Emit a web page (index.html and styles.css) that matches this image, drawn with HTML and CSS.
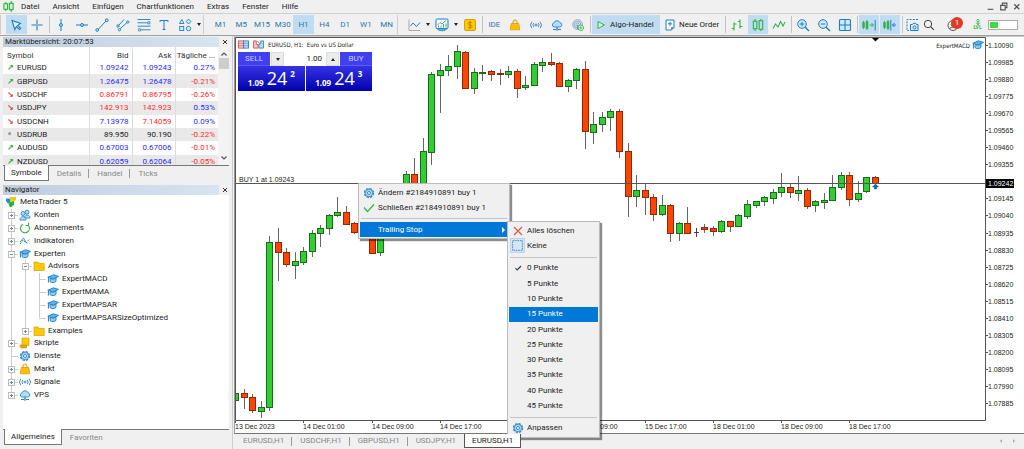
FILE: index.html
```html
<!DOCTYPE html>
<html lang="de">
<head>
<meta charset="utf-8">
<title>MetaTrader 5</title>
<link rel="stylesheet" href="styles.css">
</head>
<body>
<svg class="sprite" aria-hidden="true">
  <symbol id="i-cap" viewBox="0 0 12 12"><path d="M.8 4.2 6.5 1.8l5 1.6-5.3 2.7z" fill="#5fb4ee" stroke="#1f7fc0" stroke-width=".9"/><path d="M3 5.4v3.2c1.6 1.6 4.6 1.2 6-.2V4.9L6.2 6.3z" fill="#8fccf5" stroke="#1f7fc0" stroke-width=".9"/><path d="M1.4 4.6v5" stroke="#1f7fc0"/></symbol>
  <symbol id="i-folder" viewBox="0 0 12 12"><path d="M1 2h4l1 1.500h5.200V10.500H1z" fill="#ffc800" stroke="#d9a000" stroke-width=".7"/></symbol>
  <symbol id="i-gear" viewBox="0 0 12 12"><circle cx="6" cy="6" r="4.400" fill="#b5dcf8" stroke="#2a82c4" stroke-width="1.500" stroke-dasharray="2.300 1.150"/><circle cx="6" cy="6" r="3.600" fill="#b5dcf8" stroke="#2a82c4" stroke-width=".7"/><circle cx="6" cy="6" r="1.500" fill="#fff" stroke="#2a82c4" stroke-width=".9"/></symbol>
  <symbol id="i-bag" viewBox="0 0 12 12"><path d="M2.200 4.500h7.600l1 6.300H1.200z" fill="#ffbf00" stroke="#d99a00" stroke-width=".7"/><path d="M4 5V3a2 2 0 0 1 4 0v2" fill="none" stroke="#d99a00" stroke-width="1"/></symbol>
  <symbol id="i-signal" viewBox="0 0 12 12"><g fill="none" stroke="#2a82c4" stroke-width=".9"><circle cx="6" cy="6" r="1"/><path d="M3.800 4a3 3 0 0 0 0 4M8.200 4a3 3 0 0 1 0 4M1.800 2.800a5 5 0 0 0 0 6.400M10.200 2.800a5 5 0 0 1 0 6.400"/></g></symbol>
  <symbol id="i-cloud" viewBox="0 0 12 12"><path d="M3 8a2.100 2.100 0 0 1 0-4.100 3.200 3.200 0 0 1 6-.2A2.200 2.200 0 0 1 9.200 8z" fill="#b5dcf8" stroke="#2a82c4" stroke-width=".9"/><path d="M6 8v2.500M2 10.500h8" stroke="#2a82c4"/><circle cx="6" cy="10.400" r="1" fill="#b5dcf8" stroke="#2a82c4" stroke-width=".7"/></symbol>
  <symbol id="i-candles" viewBox="0 0 12 12"><g fill="none" stroke="#35b34a"><path d="M3.500.8v2M3.500 9.200v2M8.500.8v1.500M8.500 9.700v1.500"/><rect x="2" y="2.800" width="3" height="6.400"/><rect x="7" y="2.300" width="3" height="7.400"/></g></symbol>
</svg>

<header class="menubar">
  <svg class="logo" viewBox="0 0 12 12" aria-hidden="true"><g fill="none" stroke="#27b43e" stroke-width="1.200"><path d="M3 1v10M9 0v12"/><rect x="1" y="3" width="4" height="6" fill="#dff5e2"/><rect x="7" y="2.500" width="4" height="7" fill="#dff5e2"/></g></svg>
  <nav class="menus">
    <button>Datei</button><button>Ansicht</button><button>Einfügen</button><button>Chartfunktionen</button><button>Extras</button><button>Fenster</button><button>Hilfe</button>
  </nav>
  <div class="winctl">
    <button aria-label="Minimieren"><svg viewBox="0 0 8 8"><path d="M1.500 6.500h5" stroke="#555"/></svg></button>
    <button aria-label="Wiederherstellen"><svg viewBox="0 0 8 8"><path d="M1.500 3h4v4h-4zM3 3V1h4v4H5.500" fill="none" stroke="#555"/></svg></button>
    <button aria-label="Schließen"><svg viewBox="0 0 8 8"><path d="M2 2l4.500 4.500M6.500 2 2 6.500" stroke="#555" stroke-width="1.100"/></svg></button>
  </div>
</header>

<div class="toolbar" role="toolbar" aria-label="Werkzeuge">
  <span class="handle"></span>
  <div class="group g-pointer">
    <button class="on" aria-label="Cursor"><svg viewBox="0 0 14 14"><path d="M3 2.500 5.800 11.500l1.700-3 3 3 1.200-1.200-3-3L11.500 5.500z" fill="#e8f4fd" stroke="#1f7fc0" stroke-width="1.100"/></svg></button>
    <button aria-label="Fadenkreuz"><svg viewBox="0 0 14 14"><path d="M7 1.500V6M7 8v4.500M1.500 7H6M8 7h4.500" stroke="#1f7fc0" stroke-width="1.100"/><path d="M6 7h2M7 6v2" stroke="#1f7fc0" stroke-width=".6"/></svg></button>
  </div>
  <span class="sep"></span>
  <div class="group g-draw">
    <button aria-label="Vertikale Linie"><svg viewBox="0 0 14 14"><path d="M7 1v4.500M7 8.500V13" stroke="#1f7fc0"/><circle cx="7" cy="7" r="1.500" fill="#b5dcf8" stroke="#1f7fc0"/></svg></button>
    <button aria-label="Horizontale Linie"><svg viewBox="0 0 14 14"><path d="M1 7h4.500M8.500 7H13" stroke="#1f7fc0"/><circle cx="7" cy="7" r="1.500" fill="#b5dcf8" stroke="#1f7fc0"/></svg></button>
    <button aria-label="Trendlinie"><svg viewBox="0 0 14 14"><path d="M3 11.500 11 3" stroke="#1f7fc0"/><circle cx="2.200" cy="12" r="1.400" fill="#b5dcf8" stroke="#1f7fc0" stroke-width=".9"/><circle cx="11.800" cy="2.200" r="1.400" fill="#b5dcf8" stroke="#1f7fc0" stroke-width=".9"/></svg></button>
    <button aria-label="Kanal"><svg viewBox="0 0 14 14"><path d="M2 8 8 1.500M3 11.800 11.500 4" stroke="#1f7fc0"/><circle cx="2" cy="8" r="1.200" fill="#b5dcf8" stroke="#1f7fc0" stroke-width=".8"/><circle cx="3.500" cy="11.700" r="1.200" fill="#b5dcf8" stroke="#1f7fc0" stroke-width=".8"/><circle cx="11.800" cy="4" r="1.200" fill="#b5dcf8" stroke="#1f7fc0" stroke-width=".8"/></svg></button>
    <button aria-label="Fibonacci"><svg viewBox="0 0 14 14"><path d="M.5 1.500h13M.5 4.800h10M.5 8.200h13M4 11.800h9.500" stroke="#1f7fc0" stroke-width=".9"/><circle cx="11.800" cy="4.800" r="1.300" fill="#b5dcf8" stroke="#1f7fc0" stroke-width=".8"/><circle cx="2.500" cy="11.800" r="1.300" fill="#b5dcf8" stroke="#1f7fc0" stroke-width=".8"/></svg></button>
    <button aria-label="Text"><svg viewBox="0 0 14 14"><path d="M3 4V2.500h8V4M7 2.500v9M5.500 11.500h3" fill="none" stroke="#1f7fc0"/></svg></button>
    <button aria-label="Formen"><svg viewBox="0 0 14 14"><g fill="#d5ebfb" stroke="#1f7fc0" stroke-width=".9"><path d="M3.800 1.500 6 5.500H1.500z"/><path d="M10.500 1 12.800 3.500 10.500 6 8.200 3.500z"/><rect x="1.700" y="8.500" width="4" height="4"/><circle cx="10.500" cy="10.500" r="2.200"/></g></svg></button>
  </div>
  <button class="caret" aria-label="Weitere Formen"></button>
  <span class="handle wide"></span>
  <div class="group g-time">
    <button>M1</button><button>M5</button><button>M15</button><button>M30</button><button class="on">H1</button><button>H4</button><button>D1</button><button>W1</button><button>MN</button>
  </div>
  <span class="handle wide"></span>
  <div class="group g-one">
    <button aria-label="Indikatoren"><svg viewBox="0 0 14 14"><path d="M2 1.500V12.500H13" fill="none" stroke="#aaa"/><path d="M3.500 8 6 5l3.500 3.500 3.500-4" fill="none" stroke="#1f7fc0"/></svg></button>
  </div>
  <button class="caret" aria-label="Indikatorliste"></button>
  <div class="group g-one">
    <button aria-label="Vorlagen"><svg viewBox="0 0 14 14"><rect x="1" y="1" width="12" height="9.500" rx="1" fill="#fff" stroke="#1f7fc0"/><path d="M2 10.500c1.500 3 8.500 3 10 0z" fill="#5fb4ee" stroke="#1f7fc0" stroke-width=".8"/><path d="M2.500 7 5 4.500 7 6l4-3.500" fill="none" stroke="#1f7fc0" stroke-width=".8"/><path d="M3.500 9.500V7.500M6 9.500v-2M8.500 9.500V6M11 9.500v-4" stroke="#35b34a"/></svg></button>
  </div>
  <button class="caret" aria-label="Vorlagenliste"></button>
  <div class="group g-one">
    <button aria-label="Handel"><svg viewBox="0 0 14 14"><rect x="1.500" y="1.500" width="11" height="11" rx="1.500" fill="#ffc800" stroke="#d9a000"/><path d="M9 5c-.5-1.200-3.800-1.200-3.800.5 0 1.800 3.800 1 3.800 3 0 1.600-3.500 1.600-4 .2M7 3v8" fill="none" stroke="#b07c00" stroke-width=".9"/></svg></button>
  </div>
  <span class="sep"></span>
  <div class="group g-market">
    <button>IDE</button>
    <button aria-label="Markt"><svg><use href="#i-bag"/></svg></button>
    <button aria-label="Signale"><svg><use href="#i-signal"/></svg></button>
    <button aria-label="VPS"><svg><use href="#i-cloud"/></svg></button>
    <button aria-label="Netzwerk"><svg viewBox="0 0 14 14"><g fill="none" stroke="#5d8fb5" stroke-width=".9"><circle cx="6.500" cy="6.500" r="5.600"/><circle cx="6.500" cy="6.500" r="3.700"/><circle cx="6.500" cy="6.500" r="1.800"/><path d="M6.500 6.500v6"/></g><circle cx="10.300" cy="10.300" r="3.200" fill="#e6f8e8" stroke="#35b34a"/><path d="M8.500 10.300h3.600M10.300 8.500v3.600" stroke="#35b34a"/></svg></button>
  </div>
  <span class="sep"></span>
  <button class="wide-btn algo on"><svg viewBox="0 0 10 10"><path d="M2 1.500 8.500 5 2 8.500z" fill="#d9f5dd" stroke="#35b34a"/></svg>Algo-Handel</button>
  <button class="wide-btn order"><svg viewBox="0 0 10 12"><path d="M1 1h8v7.500L6.500 11H1z" fill="#fff" stroke="#1f7fc0"/><path d="M9 8.200H6.200V11z" fill="#1f7fc0"/><path d="M3 4.800h4M5 2.800v4" stroke="#1f7fc0"/></svg>Neue Order</button>
  <span class="sep"></span>
  <div class="group g-three">
    <button aria-label="Balken"><svg viewBox="0 0 14 14"><path d="M4 4.500v8M1.800 10.500H4M4 6h2.500M10 1.500v9M7.800 3.500H10M10 8.500h2.500" fill="none" stroke="#35b34a" stroke-width="1.100"/></svg></button>
    <button class="on" aria-label="Kerzen"><svg><use href="#i-candles"/></svg></button>
    <button aria-label="Linie"><svg viewBox="0 0 14 14"><path d="M1 10.500 3.500 6 6 9l2.500-5.500L11 8l2-4" fill="none" stroke="#35b34a" stroke-width="1.100"/></svg></button>
  </div>
  <span class="sep"></span>
  <div class="group g-three">
    <button aria-label="Vergrößern"><svg viewBox="0 0 14 14"><path d="M9 9l4 4" stroke="#1f7fc0" stroke-width="1.400"/><circle cx="6" cy="6" r="4.300" fill="#cfe8fb" stroke="#1f7fc0"/><path d="M3.800 6h4.400M6 3.800v4.400" stroke="#1f7fc0"/></svg></button>
    <button aria-label="Verkleinern"><svg viewBox="0 0 14 14"><path d="M9 9l4 4" stroke="#1f7fc0" stroke-width="1.400"/><circle cx="6" cy="6" r="4.300" fill="#cfe8fb" stroke="#1f7fc0"/><path d="M3.800 6h4.400" stroke="#1f7fc0"/></svg></button>
    <button aria-label="Kacheln"><svg viewBox="0 0 14 14"><rect x="1.500" y="1.500" width="11" height="11" rx="1" fill="#cfe8fb" stroke="#1f7fc0" stroke-width="1.100"/><path d="M7 1.500v11M1.500 7h11" stroke="#1f7fc0" stroke-width="1.100"/></svg></button>
  </div>
  <span class="sep"></span>
  <div class="group g-scroll">
    <button class="on" aria-label="Autoscroll"><svg viewBox="0 0 14 14"><path d="M.5 4.500h2v5h-2zM4 3.500h2v7H4z" fill="#35b34a" stroke="#35b34a" stroke-width=".6"/><path d="M1.500 3v8M5 2v10M7.500 7h3.500M9.500 5l2 2-2 2" fill="none" stroke="#35b34a"/><path d="M13.200 2v10.500" stroke="#1f7fc0"/></svg></button>
    <button class="on" aria-label="Chartverschiebung"><svg viewBox="0 0 14 14"><path d="M.5 4.500h2v5h-2zM4 3.500h2v7H4z" fill="#35b34a" stroke="#35b34a" stroke-width=".6"/><path d="M1.500 3v8M5 2v10" stroke="#35b34a"/><path d="M7.800 2v10.500M9.500 7H13M11.500 5l-2 2 2 2" fill="none" stroke="#1f7fc0"/></svg></button>
  </div>
  <span class="sep"></span>
  <div class="group g-shot"><button aria-label="Screenshot"><svg viewBox="0 0 14 14"><path d="M13 1.500H2v11h2" fill="none" stroke="#1f7fc0" stroke-dasharray="2 1.200"/><path d="M5.500 6.500h2l.8-1.200h2.400l.8 1.200H13v6H5.500z" fill="#d5ebfb" stroke="#1f7fc0"/><circle cx="9.500" cy="9.500" r="1.500" fill="none" stroke="#1f7fc0"/></svg></button></div>
  <div class="group g-find"><button aria-label="Suchen"><svg viewBox="0 0 14 14"><circle cx="6" cy="6" r="3.700" fill="none" stroke="#444"/><path d="M8.800 8.800l3 3" stroke="#444" stroke-width="1.200"/></svg></button></div>
  <div class="group g-user"><button aria-label="Konto, 1 Meldung"><svg viewBox="0 0 14 14"><circle cx="7" cy="7.500" r="5" fill="none" stroke="#555"/><circle cx="7" cy="6.500" r="1.800" fill="none" stroke="#555"/><path d="M3.500 11c1-2.500 6-2.500 7 0" fill="none" stroke="#555"/></svg><span class="badge">1</span></button></div>
  <button class="level" aria-label="Level"><svg viewBox="0 0 8 6"><path d="M4 .8V6M2 3.500 4 5.500l2-2" fill="none" stroke="#35b34a"/><circle cx="4" cy="1.500" r="1.200" fill="#e6f8e8" stroke="#35b34a" stroke-width=".8"/></svg>LVL</button>
  <span class="battery"><span></span></span>
</div>

<main class="main">
  <aside class="side">
    <section class="panel watch">
      <div class="title"><h2>Marktübersicht: 20:07:53</h2><button aria-label="Schließen"><svg viewBox="0 0 8 8"><path d="M2 2l4 4M6 2 2 6" stroke="#333"/></svg></button></div>
      <div class="watch-body">
        <table>
          <colgroup><col><col class="num"><col class="num"><col class="num"></colgroup>
          <thead><tr><th>Symbol</th><th>Bid</th><th>Ask</th><th>Tägliche ...</th></tr></thead>
          <tbody>
            <tr><td class="up">EURUSD</td><td class="b">1.09242</td><td class="b">1.09243</td><td class="b">0.27%</td></tr>
            <tr><td class="up">GBPUSD</td><td class="b">1.26475</td><td class="b">1.26478</td><td class="r">-0.21%</td></tr>
            <tr><td class="down">USDCHF</td><td class="r">0.86791</td><td class="r">0.86795</td><td class="r">-0.26%</td></tr>
            <tr><td class="down">USDJPY</td><td class="r">142.913</td><td class="r">142.923</td><td class="b">0.53%</td></tr>
            <tr><td class="down">USDCNH</td><td class="b">7.13978</td><td class="r">7.14059</td><td class="b">0.09%</td></tr>
            <tr><td class="flat">USDRUB</td><td>89.950</td><td>90.190</td><td class="r">-0.22%</td></tr>
            <tr><td class="up">AUDUSD</td><td class="b">0.67003</td><td class="b">0.67006</td><td class="r">-0.01%</td></tr>
            <tr><td class="up">NZDUSD</td><td class="b">0.62059</td><td class="b">0.62064</td><td class="r">-0.05%</td></tr>
          </tbody>
        </table>
        <div class="scroll">
          <svg viewBox="0 0 8 8"><path d="M1.500 5.500 4 3l2.500 2.500" fill="none" stroke="#555" stroke-width="1.200"/></svg>
          <span class="thumb"></span>
          <svg viewBox="0 0 8 8"><path d="M1.500 2.500 4 5l2.500-2.500" fill="none" stroke="#555" stroke-width="1.200"/></svg>
        </div>
      </div>
      <div class="tabs"><button class="active">Symbole</button><button>Details</button><button>Handel</button><button>Ticks</button></div>
    </section>

    <section class="panel nav">
      <div class="title"><h2>Navigator</h2><button aria-label="Schließen"><svg viewBox="0 0 8 8"><path d="M2 2l4 4M6 2 2 6" stroke="#333"/></svg></button></div>
      <div class="tree-wrap">
        <ul class="tree">
          <li><svg viewBox="0 0 12 12"><path d="M1 2.500h4.500V6L3 7.500 1 5z" fill="#1f8fe0"/><path d="M5 1h6v3L8 6 5 4.500z" fill="#ffc800"/><path d="M3.500 6.500 9 5v3.500L6 11.500 4 10z" fill="#27b43e"/></svg>MetaTrader 5</li>
          <li><i class="plus"></i><svg viewBox="0 0 12 12"><g fill="#b5dcf8" stroke="#2a82c4" stroke-width=".9"><circle cx="8" cy="3.200" r="2"/><path d="M5.500 9c0-4 5.500-4 5.500 0z"/><circle cx="4" cy="4.500" r="2"/><path d="M1 11c0-4.500 6-4.500 6 0z"/></g></svg>Konten</li>
          <li><i class="plus"></i><svg viewBox="0 0 12 12"><path d="M4 2.200A4.500 4.500 0 1 0 9.500 3.500M9.500 3.500h-3M9.500 3.500V.8" fill="none" stroke="#35b34a" stroke-width="1.100"/></svg>Abonnements</li>
          <li><i class="plus"></i><svg viewBox="0 0 12 12"><path d="M1 9 4 5l3 3 4-4.500" fill="none" stroke="#35b34a" stroke-dasharray="2 1"/><path d="M1 7l3.500-4L7 7.500 8.500 8" fill="none" stroke="#2a82c4" stroke-width=".9"/></svg>Indikatoren</li>
          <li><i class="minus"></i><svg><use href="#i-cap"/></svg>Experten</li>
          <li><i class="line"></i><i class="minus"></i><svg><use href="#i-folder"/></svg>Advisors</li>
          <li><i class="line"></i><i class="line"></i><i class="tee"></i><svg><use href="#i-cap"/></svg>ExpertMACD</li>
          <li><i class="line"></i><i class="line"></i><i class="tee"></i><svg><use href="#i-cap"/></svg>ExpertMAMA</li>
          <li><i class="line"></i><i class="line"></i><i class="tee"></i><svg><use href="#i-cap"/></svg>ExpertMAPSAR</li>
          <li><i class="line"></i><i class="line"></i><i class="tee end"></i><svg><use href="#i-cap"/></svg>ExpertMAPSARSizeOptimized</li>
          <li><i class="line"></i><i class="plus end"></i><svg><use href="#i-folder"/></svg>Examples</li>
          <li><i class="plus"></i><svg viewBox="0 0 12 12"><path d="M3 1h7v7.500H3z" fill="#ffc800" stroke="#d9a000" stroke-width=".7"/><path d="M1 8h6.500v3H2.500C1.500 11 1 10 1 8z" fill="#e6a800" stroke="#c08a00" stroke-width=".6"/></svg>Skripte</li>
          <li><i class="tee"></i><svg><use href="#i-gear"/></svg>Dienste</li>
          <li><i class="plus"></i><svg><use href="#i-bag"/></svg>Markt</li>
          <li><i class="plus"></i><svg><use href="#i-signal"/></svg>Signale</li>
          <li><i class="plus end"></i><svg><use href="#i-cloud"/></svg>VPS</li>
        </ul>
      </div>
      <div class="tabs"><button class="active">Allgemeines</button><button class="plain">Favoriten</button></div>
    </section>
  </aside>

  <section class="work">
    <div class="chart">
      <svg id="plot" class="plot" viewBox="235 37 751 396" preserveAspectRatio="xMinYMin meet" role="img" aria-label="EURUSD H1">
        <g id="candles"></g>
        <path d="M235 183.500H986" stroke="#555"/>
        <path d="M875.500 184l3 3h-2v2h-2v-2h-2z" fill="#0a64b4" stroke="#0a64b4" stroke-width=".6"/>
        <path d="M872 38h7l-3.500 3.500z" fill="#000"/>
        <path d="M235.500 37.500h750v383h-750z" fill="none" stroke="#555"/>
        <g id="times"></g>
        <text x="239" y="182">BUY 1 at 1.09243</text>
      </svg>
      <ol class="prices">
        <li>1.10090</li><li>1.09985</li><li>1.09880</li><li>1.09775</li><li>1.09670</li><li>1.09565</li><li>1.09460</li><li>1.09355</li><li class="now"><b>1.09242</b></li><li>1.09145</li><li>1.09040</li><li>1.08935</li><li>1.08830</li><li>1.08725</li><li>1.08620</li><li>1.08515</li><li>1.08410</li><li>1.08305</li><li>1.08200</li><li>1.08095</li><li>1.07990</li><li>1.07885</li>
      </ol>
      <div class="chart-head">
        <svg viewBox="0 0 12 10"><rect x=".5" y="1" width="5.500" height="8" fill="#f7c9c6" stroke="#d9534f"/><rect x="6" y="1" width="5.500" height="8" fill="#c3e0f7" stroke="#2a82c4"/><path d="M1 3.700h4.500M1 6.300h4.500" stroke="#d9534f" stroke-width=".7"/><path d="M6.500 3.700H11M6.500 6.300H11" stroke="#2a82c4" stroke-width=".7"/></svg>
        <svg viewBox="0 0 12 10"><path d="M.5 1h3v4h2v4h-5z" fill="#f7c9c6" stroke="#d9534f"/><path d="M6.500 9V4.500h2V1h3v8z" fill="#c3e0f7" stroke="#2a82c4"/><path d="M4.500 1l3 3" stroke="#d9534f"/></svg>
        <span>EURUSD, H1:&nbsp; Euro vs US Dollar</span>
      </div>
      <div class="expert">ExpertMACD<svg><use href="#i-cap"/></svg></div>
      <form class="trade">
        <div class="trade-top">
          <button type="button" class="side-btn">SELL</button>
          <button type="button" class="spin" aria-label="Weniger"></button>
          <input type="text" value="1.00" aria-label="Volumen">
          <button type="button" class="spin more" aria-label="Mehr"></button>
          <button type="button" class="side-btn">BUY</button>
        </div>
        <div class="trade-prices">
          <div class="quote"><small>1.09</small><strong>24</strong><sup>2</sup></div>
          <div class="quote"><small>1.09</small><strong>24</strong><sup>3</sup></div>
        </div>
      </form>
      <div class="menu menu-order" role="menu">
        <button role="menuitem"><svg><use href="#i-gear"/></svg>Ändern #2184910891 buy 1</button>
        <button role="menuitem"><svg viewBox="0 0 12 12"><path d="M1 5.500 4.500 9.500 11 2.500" fill="none" stroke="#35b34a" stroke-width="1.200"/></svg>Schließen #2184910891 buy 1</button>
        <hr>
        <button role="menuitem" class="hot"><svg></svg>Trailing Stop<span class="arrow"></span></button>
      </div>
      <div class="menu menu-stop" role="menu">
        <button role="menuitem"><svg viewBox="0 0 12 12"><path d="M2 2l8 8M10 2l-8 8" stroke="#e0504c" stroke-width="1.100"/></svg>Alles löschen</button>
        <button role="menuitem"><svg class="boxed" viewBox="0 0 12 12"><rect x="1.500" y="1.500" width="9" height="9" fill="none" stroke="#2a82c4" stroke-width=".8" stroke-dasharray="1.500 .75"/></svg>Keine</button>
        <hr>
        <button role="menuitem"><svg viewBox="0 0 12 12"><path d="M3.500 6 5.200 8 9 4" fill="none" stroke="#333" stroke-width="1.100"/></svg>0 Punkte</button>
        <button role="menuitem"><svg></svg>5 Punkte</button>
        <button role="menuitem"><svg></svg>10 Punkte</button>
        <button role="menuitem" class="hot"><svg></svg>15 Punkte</button>
        <button role="menuitem"><svg></svg>20 Punkte</button>
        <button role="menuitem"><svg></svg>25 Punkte</button>
        <button role="menuitem"><svg></svg>30 Punkte</button>
        <button role="menuitem"><svg></svg>35 Punkte</button>
        <button role="menuitem"><svg></svg>40 Punkte</button>
        <button role="menuitem"><svg></svg>45 Punkte</button>
        <hr>
        <button role="menuitem"><svg><use href="#i-gear"/></svg>Anpassen</button>
      </div>
    </div>
    <div class="chart-tabs">
      <button>EURUSD,H1</button><button>USDCHF,H1</button><button>GBPUSD,H1</button><button>USDJPY,H1</button><button class="active">EURUSD,H1</button>
      <span class="pager"><button aria-label="Zurück"><svg viewBox="0 0 6 6"><path d="M4 1v4L2 3z" fill="#aaa"/></svg></button><button aria-label="Weiter"><svg viewBox="0 0 6 6"><path d="M2 1v4l2-2z" fill="#aaa"/></svg></button></span>
    </div>
  </section>
</main>
<script src="chart.js"></script>
</body>
</html>
```
FILE: styles.css
```css
* { box-sizing: border-box; }
body {
  margin: 0;
  min-height: 100vh;
  display: flex;
  flex-direction: column;
  background: #f0f0f0;
  color: #222;
  font: 8px/12px Roboto, "Noto Sans", sans-serif;
}
button {
  border: 0;
  padding: 0;
  background: none;
  color: inherit;
  font: inherit;
  white-space: nowrap;
}
h2, ul, ol { margin: 0; padding: 0; font: inherit; list-style: none; }
svg { display: block; flex: none; }
.sprite { position: absolute; width: 0; height: 0; }

/* Menu bar */
.menubar {
  display: flex;
  align-items: center;
  height: 14px;
  padding: 0 3px;
  border-bottom: 1px solid #d0d0d0;
}
.logo { width: 11px; height: 11px; }
.menus { display: flex; gap: 13px; margin-left: 7px; }
.winctl { display: flex; gap: 4px; margin-left: auto; }
.winctl svg { width: 9px; height: 9px; }

/* Toolbar */
.toolbar {
  display: flex;
  align-items: stretch;
  height: 22px;
  padding: 1px 0;
  border-bottom: 1px solid #a0a0a0;
  color: #2a78b0;
}
.handle { flex: none; width: 6px; border-left: 1px solid #ccc; background: radial-gradient(circle, #bbb 40%, transparent 50%) center / 2px 2px; background-clip: content-box; padding: 0 2px; }
.handle.wide { width: 7px; }
.sep { flex: none; width: 1px; margin: 1px 1px 1px 2px; background: #c4c4c4; }
.group { display: flex; flex: none; }
.group button { flex: 1; min-width: 0; display: flex; align-items: center; justify-content: center; position: relative; }
.group svg { width: 14px; height: 14px; }
.g-market svg, .g-three use { width: 12px; height: 12px; }
.on { background: #c0dcf3; }
.g-pointer { width: 41px; }
.g-draw { width: 144px; }
.g-time { width: 187px; }
.g-one { width: 20px; }
.g-shot { width: 16px; }
.g-find { width: 18px; }
.g-market { width: 104px; }
.g-three { width: 62px; }
.g-scroll { width: 41px; gap: 1px; }
.g-user { width: 30px; }
.caret { flex: none; width: 8px; display: flex; align-items: center; justify-content: center; }
.caret::before, .spin::before { content: ""; border: 2px solid transparent; border-top: 3px solid #222; border-bottom: 0; }
.wide-btn { display: flex; flex: none; align-items: center; gap: 4px; color: #222; }
.wide-btn svg { width: 10px; height: 12px; }
.algo { width: 68px; padding-left: 4px; }
.order { width: 63px; padding-left: 5px; }
.badge {
  position: absolute;
  top: 2px;
  right: 5px;
  width: 12px;
  height: 12px;
  border-radius: 50%;
  background: #e03a26;
  color: #fff;
  text-align: center;
}
.level { flex: none; width: 19px; display: flex; flex-direction: column; align-items: center; justify-content: center; color: #35b34a; font-size: 5px; line-height: 5px; font-weight: bold; }
.level svg { width: 8px; height: 6px; }
.battery { flex: 1; max-width: 30px; height: 10px; margin: auto 4px auto 1px; padding: 1px; border: 1px solid #aaa; background: #fff; }
.battery span { display: block; width: 30%; height: 100%; background: #3fdc3f; }

.main { flex: 1; display: flex; }

/* Side panels */
.side { flex: none; width: 233px; display: flex; flex-direction: column; gap: 4px; padding: 1px 3px 4px; border-right: 1px solid #ccc; }
.panel { display: flex; flex-direction: column; min-height: 0; }
.nav { flex: 1; }
.title { display: flex; align-items: center; height: 10px; }
.title h2 { flex: 1; padding-left: 2px; line-height: 10px; background: linear-gradient(90deg, #bfcddd, #d7e4f2); }
.title button { width: 10px; }
.title svg { width: 8px; height: 8px; margin-left: 2px; }
.watch-body { display: flex; height: 118px; background: #fff; overflow: hidden; }
.watch table { flex: 1; height: 121px; border-collapse: collapse; table-layout: fixed; line-height: 11px; }
.num { width: 43px; }
.watch th { height: 14px; padding: 2px 3px 0 0; font-weight: normal; text-align: right; color: #333; }
.watch td { height: 13px; padding: 0 3px 0 0; text-align: right; }
.watch th:first-child, .watch td:first-child { text-align: left; padding-left: 4px; }
.watch th + th, .watch td + td { border-left: 1px solid #ddd; }
.watch tbody tr:nth-child(even) { background: #e9e9e9; }
.b { color: #2b2bff; }
.r { color: #ff2b2b; }
.watch td:first-child::before { display: inline-block; width: 10px; font: bold 8px/8px "DejaVu Sans", sans-serif; }
.up::before { content: "↗"; color: #27a53e; }
.down::before { content: "↘"; color: #d9403c; }
.flat::before { content: "•"; color: #999; }
.scroll { width: 11px; display: flex; flex-direction: column; align-items: center; padding: 3px 0; background: #f3f3f3; }
.scroll svg { width: 8px; height: 8px; }
.thumb { width: 10px; height: 11px; background: #cdcdcd; }
.scroll svg:last-child { margin-top: auto; }
.tabs { display: flex; height: 16px; padding-left: 1px; border-top: 1px solid #777; color: #888; }
.tabs button { padding: 0 8px; position: relative; }
.tabs button + button:not(.plain)::after { content: ""; position: absolute; right: 0; top: 3px; height: 9px; border-right: 1px solid #999; }
.tabs button:last-child::after { display: none; }
.tabs .active { margin-top: -1px; padding: 0 6px; background: #fff; color: #222; border: 1px solid #777; border-top: 0; }
.tree-wrap { flex: 1; padding-top: 1px; background: #fff; }
.tree { display: flex; flex-direction: column; height: 205px; }
.tree li { flex: 1; display: flex; align-items: center; padding-left: 1px; white-space: nowrap; }
.tree svg { width: 12px; height: 12px; margin: 0 3px 0 1px; }
.tree i { flex: none; width: 14px; align-self: stretch; position: relative; background: linear-gradient(#ccc, #ccc) 7px 0 / 1px 100% no-repeat; }
.tree .end { background-size: 1px 50%; }
.tree i:not(.line)::before { content: ""; position: absolute; left: 7px; right: 0; top: 50%; border-top: 1px solid #ccc; }
.tree .plus::after, .tree .minus::after {
  content: "";
  position: absolute;
  left: 5px;
  top: calc(50% - 2px);
  width: 5px;
  height: 5px;
  outline: 1px solid #bbb;
  background: linear-gradient(#6a88b4, #6a88b4) center / 3px 1px no-repeat, linear-gradient(#6a88b4, #6a88b4) center / 1px 3px no-repeat, #fff;
}
.tree .minus::after { background: linear-gradient(#6a88b4, #6a88b4) center / 3px 1px no-repeat, #fff; }

/* Chart */
.work { flex: 1; min-width: 0; display: flex; flex-direction: column; padding-left: 1px; }
.chart { position: relative; display: flex; align-items: flex-start; background: #fff; border-left: 1px solid #999; border-top: 1px solid #ccc; border-bottom: 1px solid #777; font: 7px/9px "Liberation Sans", Arial, sans-serif; color: #222; }
.plot { flex: 1; min-width: 0; }
.plot text { font: 7px "Liberation Sans", Arial, sans-serif; fill: #222; }
.prices { width: 38px; height: 375px; display: flex; flex-direction: column; }
.prices li { flex: 1; display: flex; align-items: center; }
.prices li::before { content: ""; width: 2px; border-top: 1px solid #555; }
.prices .now::before { display: none; }
.prices b { margin-top: 3px; padding: 0 1px 0 2px; font-weight: normal; background: #000; color: #fff; }
.chart-head { position: absolute; left: 3px; top: 3px; display: flex; align-items: center; gap: 4px; font: 6px/9px "DejaVu Sans Condensed", "DejaVu Sans", sans-serif; }
.chart-head svg { width: 11px; height: 9px; }
.expert { position: absolute; right: 40px; top: 2px; display: flex; align-items: center; gap: 2px; font: 6px/9px "DejaVu Sans Condensed", "DejaVu Sans", sans-serif; }
.expert svg { width: 12px; height: 12px; }

/* One-click trading panel */
.trade { position: absolute; left: 3px; top: 15px; width: 134px; color: #fff; }
.trade-top { display: flex; height: 14px; gap: 1px; background: #fff; }
.trade-top .side-btn { flex: none; width: 32px; color: #c8ccff; font: 8px/12px Roboto, sans-serif; background: #4040f0; border-bottom: 1px solid #5c5cf0; }
.trade-top input { flex: 1; width: 0; border: 0; padding: 0 3px; text-align: right; font: 8px/12px Roboto, sans-serif; color: #222; background: #fff; }
.spin { flex: none; width: 13px; display: flex; align-items: center; justify-content: center; background: #ececec; border: 1px solid #ddd; }
.more::before { border-top: 0; border-bottom: 3px solid #222; }
.trade-prices { display: grid; grid-template-columns: 1fr 1fr; gap: 1px; background: #fff; }
.quote { height: 25px; display: flex; justify-content: center; background: linear-gradient(#3434e6, #0000ac); }
.quote small { align-self: flex-end; font: bold 8px/16px "Open Sans", sans-serif; margin-right: 3px; }
.quote strong { font: 18px/25px "Open Sans", sans-serif; }
.quote sup { font: bold 8px/16px "Open Sans", sans-serif; margin-left: 3px; }

/* Context menus */
.menu { position: absolute; display: flex; flex-direction: column; padding: 1px; background: #f0f0f0; border: 1px solid #bbb; box-shadow: 2px 2px 1px rgba(0, 0, 0, .45); font: 8px/12px Roboto, "Noto Sans", sans-serif; }
.menu-order { left: 123px; top: 146px; width: 152px; height: 56px; }
.menu-stop { left: 272px; top: 184px; width: 93px; height: 217px; }
.menu button { flex: 1; display: flex; align-items: center; text-align: left; }
.menu svg { width: 12px; height: 12px; margin: 0 3px; }
.menu .boxed { padding: 1px; margin: 0 2px 0 1px; width: 15px; height: 15px; background: #d5e5f5; outline: 1px solid #bcd4ea; outline-offset: -1px; }
.menu hr { width: calc(100% - 2px); margin: 3px 1px; border: 0; border-top: 1px solid #c4c4c4; }
.menu .hot { background: #0078d7; color: #fff; }
.arrow { margin: 0 3px 0 auto; border: 3px solid transparent; border-left: 3px solid #fff; border-right: 0; }

/* Chart tabs */
.chart-tabs { flex: 1; display: flex; align-items: flex-start; padding-left: 1px; color: #888; }
.chart-tabs > button { height: 14px; padding: 0 8px; position: relative; }
.chart-tabs > button:not(.active)::after { content: ""; position: absolute; right: 0; top: 3px; height: 9px; border-right: 1px solid #999; }
.chart-tabs > button:nth-child(4)::after { display: none; }
.chart-tabs .active { padding: 0 7px; background: #fff; color: #222; border: 1px solid #555; border-top: 0; }
.pager { display: flex; gap: 7px; margin: 4px 7px 0 auto; }
.pager svg { width: 6px; height: 6px; }
```
FILE: chart.js
```js
// Each candle: [direction, high, body top, body bottom, low]
const candles = [
  ["u", 393, 393, 400, 400], ["d", 389, 393, 397, 408], ["d", 394, 397, 410, 412], ["u", 401, 407, 411, 417],
  ["u", 236, 242, 407, 410], ["d", 228, 242, 252, 280], ["d", 248, 252, 264, 266], ["u", 252, 261, 265, 278],
  ["u", 247, 251, 262, 264], ["u", 230, 233, 251, 256], ["u", 225, 228, 233, 246], ["u", 214, 215, 228, 234],
  ["u", 197, 212, 215, 216], ["d", 206, 212, 224, 224], ["d", 222, 223, 232, 233], ["d", 230, 231, 236, 237],
  ["d", 234, 235, 253, 253], ["u", 232, 233, 252, 255], ["u", 220, 222, 233, 234], ["u", 200, 205, 222, 225],
  ["u", 171, 174, 205, 208], ["d", 158, 174, 190, 195], ["u", 138, 151, 190, 192], ["u", 72, 74, 152, 164],
  ["u", 64, 70, 75, 112], ["u", 55, 66, 70, 75], ["u", 45, 51, 66, 78], ["d", 51, 52, 88, 88],
  ["u", 68, 72, 88, 93], ["u", 65, 72, 73, 80], ["d", 70, 71, 74, 80], ["d", 69, 73, 74, 84],
  ["u", 66, 71, 74, 77], ["d", 69, 71, 88, 97], ["u", 76, 85, 87, 89], ["u", 62, 64, 85, 85],
  ["u", 58, 62, 65, 71], ["d", 53, 62, 64, 65], ["d", 62, 63, 86, 86], ["u", 79, 80, 86, 91],
  ["u", 68, 69, 80, 88], ["d", 61, 69, 131, 148], ["u", 112, 124, 132, 143], ["u", 112, 117, 124, 131],
  ["u", 109, 111, 117, 130], ["d", 109, 111, 151, 157], ["d", 143, 151, 196, 216], ["u", 175, 190, 196, 206],
  ["d", 183, 190, 197, 214], ["d", 194, 197, 214, 220], ["u", 195, 205, 214, 215], ["d", 204, 205, 233, 241],
  ["u", 222, 223, 233, 240], ["d", 207, 223, 233, 233], ["u", 228, 232, 232, 236], ["d", 224, 227, 229, 232],
  ["d", 226, 228, 231, 235], ["u", 220, 221, 231, 232], ["d", 221, 221, 226, 231], ["u", 214, 215, 226, 226],
  ["u", 200, 204, 216, 218], ["u", 201, 201, 205, 207], ["u", 196, 197, 201, 205], ["u", 189, 192, 198, 203],
  ["u", 173, 187, 192, 196], ["d", 183, 187, 192, 197], ["u", 176, 190, 193, 200], ["d", 188, 190, 206, 208],
  ["u", 200, 201, 205, 211], ["u", 193, 200, 202, 208], ["u", 175, 187, 200, 200], ["u", 172, 175, 187, 189],
  ["d", 172, 175, 199, 205], ["u", 181, 193, 199, 201], ["u", 177, 177, 191, 192], ["d", 176, 177, 183, 183]
];
const times = ["13 Dec 2023", "14 Dec 01:00", "14 Dec 09:00", "14 Dec 17:00", "", "15 Dec 09:00",
  "15 Dec 17:00", "18 Dec 01:00", "18 Dec 09:00", "18 Dec 17:00"];
const xOf = i => Math.round(235 + i * 640 / 75);

document.getElementById("candles").innerHTML = candles.map(([dir, high, top, bottom, low], i) => {
  const x = xOf(i);
  const left = Math.max(x - 2, 236);
  const fill = dir === "u" ? "#32cd32" : "#ff4500";
  const edge = dir === "u" ? "#1c6b1c" : "#8a2a08";
  if (top === bottom) {
    return `<path d="M${x + .5} ${high}V${low + 1}M${x - 2} ${top + .5}h5" stroke="#444"/>`;
  }
  return `<path d="M${x + .5} ${high}V${low + 1}" stroke="#666"/>` +
    `<rect x="${left - .5}" y="${top + .5}" width="${x + 4 - left}" height="${bottom - top}" fill="${fill}" stroke="${edge}"/>`;
}).join("");

document.getElementById("times").innerHTML = times.map((label, i) => {
  const x = xOf(i * 8);
  return `<path d="M${x + .5} 421v2" stroke="#555"/><text x="${x}" y="429">${label}</text>`;
}).join("");
```
